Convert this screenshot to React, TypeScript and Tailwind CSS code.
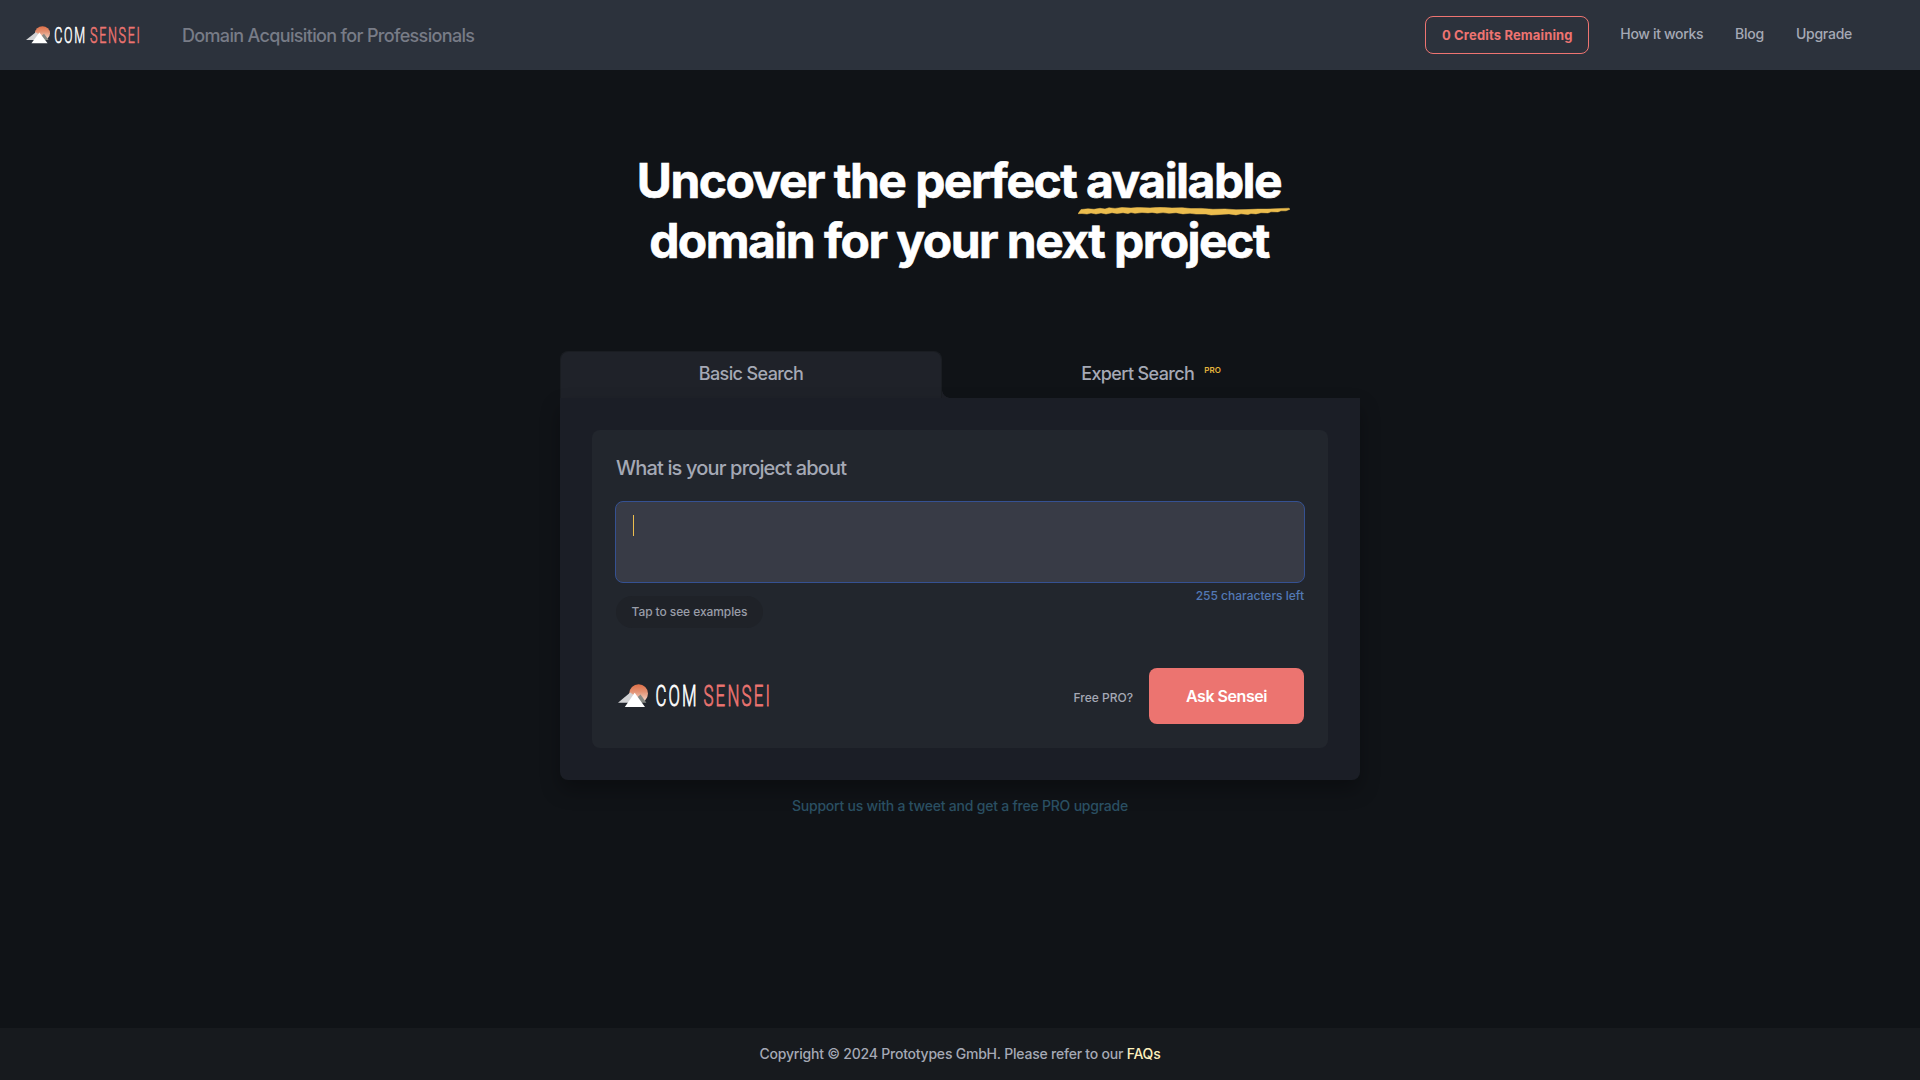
import React from "react";

type LogoProps = { id: string; className: string };

function MountainLogo({ id, className }: LogoProps) {
  return (
    <svg viewBox="0 0 30 24" className={className} preserveAspectRatio="none" aria-hidden="true">
      <defs>
        <linearGradient id={id} x1="0" y1="0" x2="0" y2="1">
          <stop offset="0" stopColor="#df6f47" />
          <stop offset="0.4" stopColor="#e39273" />
          <stop offset="1" stopColor="#f6e4dc" />
        </linearGradient>
      </defs>
      <circle cx="20.6" cy="9.6" r="9.4" fill={`url(#${id})`} />
      <path d="M0 18.8 12.2 8.4 17 12v6.8z" fill="#d2d2d4" />
      <path d="m18.5 14 4-3.6 5.9 8.4H21z" fill="#858782" />
      <path d="M6.8 23 16.7 8.8 27 23z" fill="#fff" />
    </svg>
  );
}

function Wordmark({ className }: { className: string }) {
  return (
    <svg
      viewBox="0 -8 118 40"
      className={className}
      preserveAspectRatio="none"
      fontFamily="Roboto, 'Liberation Sans', sans-serif"
      fontSize="29"
      fontWeight="300"
    >
      <text transform="translate(0.4 22) scale(0.58 1)" x="0" y="0" textLength="71" lengthAdjust="spacing" fill="#fff" stroke="#fff" strokeWidth="0.8">COM</text>
      <text transform="translate(48.4 22) scale(0.58 1)" x="0" y="0" textLength="115" lengthAdjust="spacing" fill="#ec7470" stroke="#ec7470" strokeWidth="0.8">SENSEI</text>
    </svg>
  );
}

function Underline() {
  return (
    <svg viewBox="0 0 212 9" className="absolute top-[55.5px] -left-[8px] h-[9px] w-[212px]" fill="#ecbd4e" stroke="#ecbd4e" strokeWidth="0.5" aria-hidden="true">
      <path d="M0 6.7 3 2.5 10 1.8 16 2.3 22 1.3 27 2 31 .8 37 1.4 44 .5 53 1.1 60 .4 72 .9 82 .2 94 1 104 .7 113 1.6 123 1.4 135 2.3 147 2 158 2.7 168 2.6 180 2.1 189 2.1 198 1.7 211 1.2 212 2.2 208 3.8 203 3.8 200 4.9 193 4.8 190 5.9 183 5.7 178 6.9 173 6.5 170 7.5 163 6.8 158 7.9 151 6.9 146 7.2 139 7.7 133 8 128 7 118 7 112 6.3 105 6.9 98 5.7 91 6.3 85 5.6 79 6.2 74 5.4 70 5.9 64 5.5 57 6.3 53 5.5 50 6.6 45 5.7 39 6.5 34 5.7 28 7 23 5.9 18 7 13 6 9 7 4 6.5z" />
    </svg>
  );
}

export default function App() {
  return (
    <div className="flex h-[1080px] w-full flex-col overflow-hidden bg-[#101317] font-['Inter',sans-serif] font-[450] text-[#a5a9b5]">
      <header className="flex h-[70px] shrink-0 items-center bg-[#2c323c] pl-[26px] pr-[68px]">
        <div className="flex w-[156px] items-center">
          <MountainLogo id="sun-header" className="h-[18px] w-[24px]" />
          <Wordmark className="ml-[4px] h-[30px] w-[88px]" />
        </div>
        <p className="mt-0.5 text-lg tracking-[-0.66px] whitespace-nowrap text-[#787c87]">Domain Acquisition for Professionals</p>
        <nav className="ml-auto flex items-center text-sm tracking-[-0.26px] whitespace-nowrap">
          <span className="mr-[31px] flex h-[38px] w-[164px] items-center justify-center rounded-lg border border-[#ee7471] pt-px text-[13px] font-bold tracking-[0.15px] text-[#ee7471]">
            0 Credits Remaining
          </span>
          <span className="mr-8 -mt-0.5 tracking-[-0.34px]">How it works</span>
          <span className="mr-8 -mt-0.5">Blog</span>
          <span className="-mt-0.5">Upgrade</span>
        </nav>
      </header>

      <main className="flex flex-1 flex-col items-center pt-[81px]">
        <h1 className="mr-0.5 h-[200px] text-center text-5xl leading-[60px] font-bold tracking-[-1.54px] whitespace-nowrap text-white [-webkit-text-stroke:0.6px_white]">
          Uncover the perfect <span className="relative inline-block">available<Underline /></span>
          <br />
          domain for your next project
        </h1>

        <div className="flex h-[47px] w-[800px] text-lg">
          <div className="flex w-[382px] items-center justify-center rounded-t-lg border border-b-0 border-[#1a1d22] bg-[#1f2229] pb-0.5 tracking-[-0.62px]">
            Basic Search
          </div>
          <div className="relative flex flex-1 items-center justify-center pb-0.5 tracking-[-0.62px]">
            <span className="absolute bottom-0 left-0 size-2 bg-[radial-gradient(circle_at_100%_0,transparent_7.5px,#1c1e25_8px)]" />
            Expert Search
            <span className="mb-1.5 ml-[10px] text-[8px] font-semibold tracking-normal text-[#e5b53c]">PRO</span>
          </div>
        </div>

        <section className="h-[382px] w-[800px] rounded-b-lg bg-[#1b1e26] p-8 shadow-[0_10px_20px_rgba(0,0,0,0.3)]">
          <div className="flex h-[318px] flex-col rounded-lg bg-[#22262d] px-[23px] pt-[23px] pb-6">
            <h2 className="pl-px text-xl leading-[30px] tracking-[-0.84px]">What is your project about</h2>
            <div className="mt-[18px] h-[82px] shrink-0 rounded-lg border border-[#355192] bg-[#383b46] px-[17px] pt-[13px]">
              <div className="h-[21px] w-px bg-[#ecbd4e]" />
            </div>
            <div className="flex items-start justify-between pr-px pl-px text-xs">
              <button className="mt-[13px] h-8 w-[147px] rounded-full bg-[#1f2228] tracking-[-0.08px] text-[#999da8]">Tap to see examples</button>
              <span className="mt-[5px] text-[#5379b5]">255 characters left</span>
            </div>
            <div className="mt-auto flex h-14 items-center pr-px pl-[3px]">
              <MountainLogo id="sun-card" className="h-[24px] w-[30px]" />
              <Wordmark className="ml-[7px] h-[40px] w-[118px]" />
              <span className="mt-1 mr-4 ml-auto text-xs">Free PRO?</span>
              <button className="h-14 w-[155px] rounded-lg bg-[#ec7470] text-base font-semibold tracking-[-0.45px] text-white">Ask Sensei</button>
            </div>
          </div>
        </section>
        <p className="mt-4 text-sm tracking-[-0.22px] text-[#2a4f62]">Support us with a tweet and get a free PRO upgrade</p>
      </main>

      <footer className="flex h-[52px] shrink-0 items-center justify-center bg-[#171a1e] text-sm tracking-[-0.22px]">
        <p>Copyright © 2024 Prototypes GmbH. Please refer to our <span className="text-[#fdf0bd]">FAQs</span></p>
      </footer>
    </div>
  );
}
